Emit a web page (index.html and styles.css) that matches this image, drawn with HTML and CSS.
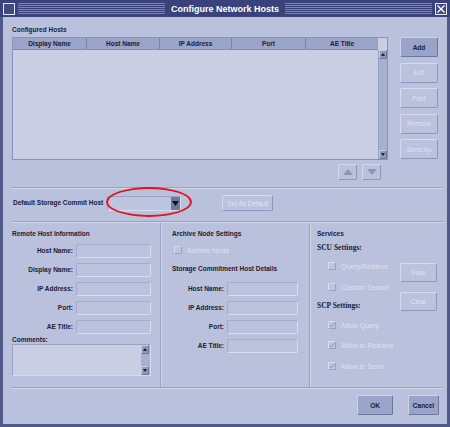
FILE: index.html
```html
<!DOCTYPE html>
<html>
<head>
<meta charset="utf-8">
<title>Configure Network Hosts</title>
<link rel="stylesheet" href="styles.css">
</head>
<body>
<div class="window">
  <div class="titlebar">
    <span class="tb-icon"></span>
    <span class="stripes"></span>
    <span class="title">Configure Network Hosts</span>
    <span class="stripes"></span>
    <span class="tb-close">
      <svg width="12" height="12" viewBox="0 0 12 12"><rect x="0.5" y="0.5" width="11" height="11" fill="#3f4a80" stroke="#e4e7f5"/><path d="M2.5 2.5 L9.5 9.5 M9.5 2.5 L2.5 9.5" stroke="#ffffff" stroke-width="1.4"/></svg>
    </span>
  </div>
  <div class="content">
    <div class="hosts">
      <div class="hosts-left">
        <div class="lbl">Configured Hosts</div>
        <div class="table">
          <div class="thead">
            <div class="th w1">Display Name</div>
            <div class="th w2">Host Name</div>
            <div class="th w3">IP Address</div>
            <div class="th w4">Port</div>
            <div class="th w5">AE Title</div>
          </div>
          <div class="corner"></div>
          <div class="tbody"></div>
          <div class="vscroll">
            <span class="sarrow"><svg width="7" height="7" viewBox="0 0 7 7"><path d="M1 5 L3.5 2 L6 5 Z" fill="#111"/></svg></span>
            <span class="sarrow"><svg width="7" height="7" viewBox="0 0 7 7"><path d="M1 2 L3.5 5 L6 2 Z" fill="#111"/></svg></span>
          </div>
        </div>
        <div class="arrows">
          <span class="abtn"><svg width="10" height="6" viewBox="0 0 10 6"><path d="M0 6 L5 0 L10 6 Z" fill="#8c94b7"/></svg></span>
          <span class="abtn"><svg width="10" height="6" viewBox="0 0 10 6"><path d="M0 0 L5 6 L10 0 Z" fill="#8c94b7"/></svg></span>
        </div>
      </div>
      <div class="hosts-right">
        <div class="btn on">Add</div>
        <div class="btn off">Edit</div>
        <div class="btn off">Print</div>
        <div class="btn off">Remove</div>
        <div class="btn off">Send Ap</div>
      </div>
    </div>

    <div class="sep"></div>

    <div class="default-row">
      <span class="lbl">Default Storage Commit Host</span>
      <span class="dropdown"><span class="dd-arrow"><svg width="7" height="5" viewBox="0 0 7 5"><path d="M0 0 L7 0 L3.5 5 Z" fill="#111"/></svg></span></span>
      <span class="btn off setdef">Set As Default</span>
      <span class="ellipse"></span>
    </div>

    <div class="sep"></div>

    <div class="cols">
      <div class="col col-left">
        <div class="lbl">Remote Host Information</div>
        <div class="form form-left">
          <span class="flbl">Host Name:</span><span class="inp"></span>
          <span class="flbl">Display Name:</span><span class="inp"></span>
          <span class="flbl">IP Address:</span><span class="inp"></span>
          <span class="flbl">Port:</span><span class="inp"></span>
          <span class="flbl">AE Title:</span><span class="inp"></span>
        </div>
        <div class="lbl comments-lbl">Comments:</div>
        <div class="textarea">
          <div class="ta-body"></div>
          <div class="ta-scroll">
            <span class="sarrow"><svg width="7" height="7" viewBox="0 0 7 7"><path d="M1 5 L3.5 2 L6 5 Z" fill="#111"/></svg></span>
            <span class="sarrow"><svg width="7" height="7" viewBox="0 0 7 7"><path d="M1 2 L3.5 5 L6 2 Z" fill="#111"/></svg></span>
          </div>
        </div>
      </div>

      <div class="col col-mid">
        <div class="lbl">Archive Node Settings</div>
        <label class="chk archive"><span class="box"></span><span class="chk-text">Archive Node</span></label>
        <div class="lbl sch">Storage Commitment Host Details</div>
        <div class="form form-mid">
          <span class="flbl">Host Name:</span><span class="inp"></span>
          <span class="flbl">IP Address:</span><span class="inp"></span>
          <span class="flbl">Port:</span><span class="inp"></span>
          <span class="flbl">AE Title:</span><span class="inp"></span>
        </div>
      </div>

      <div class="col col-right">
        <div class="svc-list">
          <div class="lbl">Services</div>
          <div class="sub scu">SCU Settings:</div>
          <label class="chk c1"><span class="box"></span><span class="chk-text">Query/Retrieve</span></label>
          <label class="chk c2"><span class="box"></span><span class="chk-text">Custom Search</span></label>
          <div class="sub scp">SCP Settings:</div>
          <label class="chk c3"><span class="box checked"><svg width="6" height="6" viewBox="0 0 6 6"><path d="M0.5 3 L2.3 5 L5.5 0.8" fill="none" stroke="#8f97ba" stroke-width="1"/></svg></span><span class="chk-text">Allow Query</span></label>
          <label class="chk c4"><span class="box checked"><svg width="6" height="6" viewBox="0 0 6 6"><path d="M0.5 3 L2.3 5 L5.5 0.8" fill="none" stroke="#8f97ba" stroke-width="1"/></svg></span><span class="chk-text">Allow to Retrieve</span></label>
          <label class="chk c5"><span class="box checked"><svg width="6" height="6" viewBox="0 0 6 6"><path d="M0.5 3 L2.3 5 L5.5 0.8" fill="none" stroke="#8f97ba" stroke-width="1"/></svg></span><span class="chk-text">Allow to Send</span></label>
        </div>
        <div class="svc-btns">
          <div class="btn off">Save</div>
          <div class="btn off">Clear</div>
        </div>
      </div>
    </div>

    <div class="sep"></div>

    <div class="footer">
      <div class="btn on ok">OK</div>
      <div class="btn on cancel">Cancel</div>
    </div>
  </div>
</div>
</body>
</html>
```

FILE: styles.css
```css
* { box-sizing: border-box; margin: 0; padding: 0; }
html, body { width: 450px; height: 427px; overflow: hidden; }
body {
  font-family: "Liberation Sans", Arial, sans-serif;
  background: #b9c1dc;
  color: #1c2033;
}

.window {
  width: 450px;
  height: 427px;
  display: flex;
  flex-direction: column;
  background: #b9c1dc;
}

/* title bar */
.titlebar {
  height: 17px;
  flex: none;
  background: #39427a;
  display: flex;
  align-items: center;
  padding: 0 3px;
  gap: 3px;
}
.tb-icon {
  width: 12px;
  height: 12px;
  border: 1px solid #e4e7f5;
  background: #3f4a80;
  flex: none;
}
.stripes {
  flex: 1;
  height: 11px;
  background: repeating-linear-gradient(to bottom, #7a84b2 0 1px, transparent 1px 2px);
}
.title {
  color: #ffffff;
  font-weight: bold;
  font-size: 9px;
  line-height: 12px;
  padding: 0 3px;
  white-space: nowrap;
}
.tb-close { width: 12px; height: 12px; flex: none; display: flex; }

/* content frame */
.content {
  flex: 1;
  border: 3px solid #505987;
  border-top: 0;
  display: flex;
  flex-direction: column;
}

.lbl {
  font-size: 6.5px;
  font-weight: bold;
  line-height: 8px;
  white-space: nowrap;
}

/* configured hosts */
.hosts { display: flex; padding-left: 9px; }
.hosts-left { width: 376px; padding-top: 9px; }
.hosts-right {
  margin-left: 12px;
  padding-top: 20px;
  display: flex;
  flex-direction: column;
  gap: 5.5px;
  width: 38px;
}

.table {
  margin-top: 3px;
  width: 376px;
  height: 123px;
  border: 1px solid #8a93b8;
  display: grid;
  grid-template-columns: 365px 9px;
  grid-template-rows: 12px 1fr;
  background: #c9cee3;
}
.thead {
  display: flex;
  background: #9aa3c8;
  border-bottom: 1px solid #8089b0;
}
.th {
  font-size: 6.5px;
  font-weight: bold;
  line-height: 11px;
  text-align: center;
  border-right: 1px solid #7a83ab;
  color: #1c2033;
}
.th.w1 { width: 74px; }
.th.w2 { width: 73px; }
.th.w3 { width: 72px; }
.th.w4 { width: 74px; }
.th.w5 { width: 72px; border-right: 0; }
.corner { background: #c9cee3; }
.tbody { background: #c9cee3; }
.vscroll {
  background: #a8b0d0;
  border-left: 1px solid #9aa2c4;
  display: flex;
  flex-direction: column;
  justify-content: space-between;
}
.sarrow {
  width: 8px;
  height: 9px;
  background: #8f98bd;
  display: flex;
  align-items: center;
  justify-content: center;
  border: 1px solid;
  border-color: #c4cae3 #6f789f #6f789f #c4cae3;
}

.arrows {
  margin-top: 4px;
  display: flex;
  justify-content: flex-end;
  gap: 5px;
  padding-right: 7px;
}
.abtn {
  width: 19px;
  height: 16px;
  display: flex;
  align-items: center;
  justify-content: center;
  border: 1px solid;
  border-color: #d4d9ec #8e97bb #8e97bb #d4d9ec;
  border-radius: 2px;
  background: #bac2dd;
}

/* buttons */
.btn {
  height: 20px;
  display: flex;
  align-items: center;
  justify-content: center;
  font-size: 6.5px;
  border-radius: 2px;
  border: 1px solid;
  white-space: nowrap;
}
.btn.on {
  background: #9aa3c8;
  border-color: #ccd2e8 #6c759e #6c759e #ccd2e8;
  font-weight: bold;
  color: #1c2033;
}
.btn.off {
  background: #bac2dd;
  border-color: #d6dbee #8e97bb #8e97bb #d6dbee;
  color: #dfe3f2;
}

/* separators */
.sep {
  height: 2px;
  margin-left: 9px;
  margin-right: 4px;
  border-top: 1px solid #9aa2c4;
  border-bottom: 1px solid #d2d7ea;
  flex: none;
}
.hosts + .sep { margin-top: 7px; }
.default-row + .sep { margin-top: 10px; }
.cols + .sep { margin-top: 0; }

/* default storage row */
.default-row {
  position: relative;
  margin-top: 6px;
  height: 16px;
  display: flex;
  align-items: center;
  padding-left: 10px;
}
.dropdown {
  margin-left: 4px;
  width: 74px;
  height: 15px;
  border: 1px solid;
  border-color: #9aa2c4 #d6dbee #d6dbee #9aa2c4;
  background: #bec5df;
  display: flex;
  justify-content: flex-end;
  align-items: stretch;
}
.dd-arrow {
  width: 9px;
  background: #6f789f;
  display: flex;
  align-items: center;
  justify-content: center;
}
.setdef {
  margin-left: 41px;
  width: 51px;
  height: 16px;
}
.ellipse {
  position: absolute;
  left: 103px;
  top: -8px;
  width: 86px;
  height: 30px;
  border: 2px solid #e3141a;
  border-radius: 50%;
  pointer-events: none;
}

/* three columns */
.cols {
  display: flex;
  height: 164px;
  flex: none;
}
.col { padding-top: 7px; }
.col-left {
  width: 158px;
  padding-left: 9px;
  border-right: 1px solid #9aa2c4;
  box-shadow: 1px 0 0 #d2d7ea;
}
.col-mid {
  width: 149px;
  padding-left: 11px;
  border-right: 1px solid #9aa2c4;
  box-shadow: 1px 0 0 #d2d7ea;
}
.col-right {
  flex: 1;
  padding-left: 7px;
  display: flex;
}

.form {
  display: grid;
  column-gap: 3px;
  row-gap: 5px;
  align-items: center;
}
.form-left { margin-top: 6px; grid-template-columns: 61px 75px; }
.form-mid { margin-top: 9px; grid-template-columns: 52px 71px; }
.flbl {
  font-size: 6.5px;
  font-weight: bold;
  text-align: right;
  white-space: nowrap;
  line-height: 8px;
}
.inp {
  height: 14px;
  border: 1px solid;
  border-color: #a3abcc #d8ddef #d8ddef #a3abcc;
  border-radius: 2px;
  background: #bac2dd;
}

.comments-lbl { margin-top: 2px; }
.textarea {
  width: 139px;
  height: 32px;
  border: 1px solid;
  border-color: #9aa2c4 #d6dbee #d6dbee #9aa2c4;
  display: flex;
  background: #c9cee3;
}
.ta-body { flex: 1; }
.ta-scroll {
  width: 9px;
  background: #a8b0d0;
  display: flex;
  flex-direction: column;
  justify-content: space-between;
}

/* checkboxes */
.chk {
  display: flex;
  align-items: center;
  height: 8px;
}
.box {
  width: 8px;
  height: 8px;
  border: 1px solid;
  border-color: #d6dbee #9aa2c4 #9aa2c4 #d6dbee;
  background: #bec5df;
  display: flex;
  align-items: center;
  justify-content: center;
  flex: none;
}
.chk-text {
  margin-left: 5px;
  font-size: 7px;
  color: #dde1f0;
  white-space: nowrap;
}
.archive { margin-top: 8px; margin-left: 2px; }
.sch { margin-top: 11px; }

.svc-list { flex: 1; }
.sub {
  font-family: "Liberation Serif", "Times New Roman", serif;
  font-weight: bold;
  font-size: 7.5px;
  line-height: 8px;
  white-space: nowrap;
}
.scu { margin-top: 6px; }
.c1, .c2, .c3, .c4, .c5 { margin-left: 11px; }
.c1 { margin-top: 10px; }
.c2 { margin-top: 13px; }
.scp { margin-top: 11px; }
.c3 { margin-top: 11px; }
.c4 { margin-top: 12px; }
.c5 { margin-top: 13px; }

.svc-btns {
  width: 37px;
  margin-right: 10px;
  padding-top: 33px;
  display: flex;
  flex-direction: column;
  gap: 10px;
}
.svc-btns .btn { height: 19px; }

/* footer */
.footer {
  margin-top: 6px;
  display: flex;
  justify-content: flex-end;
  gap: 15px;
  padding-right: 8px;
}
.ok { width: 36px; }
.cancel { width: 31px; }
```
